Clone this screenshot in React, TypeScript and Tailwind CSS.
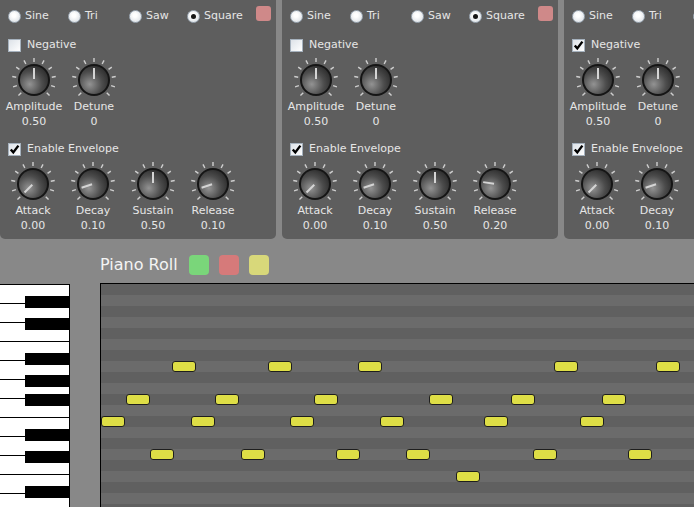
import React from 'react';

type Wave = 'Sine' | 'Tri' | 'Saw' | 'Square';

const WAVES: { name: Wave; w: string }[] = [
  { name: 'Sine', w: 'w-[60px]' },
  { name: 'Tri', w: 'w-[61px]' },
  { name: 'Saw', w: 'w-[58px]' },
  { name: 'Square', w: 'w-[69px]' },
];

const Radio: React.FC<{ checked: boolean; label: string; className: string }> = ({ checked, label, className }) => (
  <div className={`flex items-center ${className}`}>
    <span className="w-[13px] h-[13px] shrink-0 rounded-full border border-[#9eaab6] bg-[radial-gradient(circle_at_45%_40%,#ffffff_20%,#d3d9df)] flex items-center justify-center">
      {checked && <span className="w-[5px] h-[5px] rounded-full bg-[#161616]" />}
    </span>
    <span className="ml-[4px]">{label}</span>
  </div>
);

const Checkbox: React.FC<{ checked: boolean; label: string }> = ({ checked, label }) => (
  <div className="flex items-center h-[14px] pl-[8px]">
    <span className="w-[13px] h-[13px] shrink-0 border border-[#a6b2be] bg-[linear-gradient(135deg,#dde2e8,#ffffff)] flex items-center justify-center">
      {checked && (
        <svg width="11" height="11" viewBox="0 0 11 11">
          <path d="M1.8 5.4 L4.3 8.4 L9.4 1.6" fill="none" stroke="#000" strokeWidth="2.4" />
        </svg>
      )}
    </span>
    <span className="ml-[6px]">{label}</span>
  </div>
);

// angle in degrees measured from straight up
const Knob: React.FC<{ angle: number; label: string; value: string }> = ({ angle, label, value }) => {
  const id = React.useId().replace(/:/g, '');
  const rad = (a: number) => (a * Math.PI) / 180;
  const ticks = Array.from({ length: 11 }, (_, i) => -135 + i * 27);
  return (
    <div className="w-[60px] flex flex-col items-center shrink-0">
      <svg width="60" height="40" viewBox="-30 -20 60 40" className="overflow-visible">
        <defs>
          <radialGradient id={`k${id}`} cx="0.35" cy="0.65" r="0.8">
            <stop offset="0" stopColor="#939393" />
            <stop offset="0.55" stopColor="#4c4c4c" />
            <stop offset="1" stopColor="#262626" />
          </radialGradient>
        </defs>
        {ticks.map((t) => (
          <line
            key={t}
            x1={Math.sin(rad(t)) * 18}
            y1={-Math.cos(rad(t)) * 18}
            x2={Math.sin(rad(t)) * 22}
            y2={-Math.cos(rad(t)) * 22}
            stroke="#cfcfcf"
            strokeWidth="1.4"
          />
        ))}
        <circle r="16" fill="#151515" />
        <circle r="14" fill={`url(#k${id})`} />
        <line
          x1={Math.sin(rad(angle)) * 1}
          y1={-Math.cos(rad(angle)) * 1}
          x2={Math.sin(rad(angle)) * 12}
          y2={-Math.cos(rad(angle)) * 12}
          stroke="#d4d4d4"
          strokeWidth="2"
        />
      </svg>
      <div className="h-[13px] leading-[13px]">{label}</div>
      <div className="h-[17px] leading-[17px]">{value}</div>
    </div>
  );
};

const level = (v: number) => -135 + v * 270;

const Panel: React.FC<{ negative: boolean; release: number }> = ({ negative, release }) => (
  <div className="w-[276px] h-[239px] shrink-0 bg-[#5e5e5e] rounded-b-[5px] text-[#e6e6e6] text-[11px] flex flex-col">
    <div className="h-[31px] flex items-center pl-[8px] pt-[1px]">
      {WAVES.map((w) => (
        <Radio key={w.name} checked={w.name === 'Square'} label={w.name} className={w.w} />
      ))}
      <span className="w-[15px] h-[15px] mb-[5px] rounded-[3px] bg-[#cf8989]" />
    </div>
    <div className="mt-[7px]">
      <Checkbox checked={negative} label="Negative" />
    </div>
    <div className="mt-[8px] flex pl-[4px]">
      <Knob angle={level(0.5)} label="Amplitude" value="0.50" />
      <Knob angle={0} label="Detune" value="0" />
    </div>
    <div className="mt-[12px]">
      <Checkbox checked label="Enable Envelope" />
    </div>
    <div className="mt-[8px] flex pl-[3px]">
      <Knob angle={level(0)} label="Attack" value="0.00" />
      <Knob angle={level(0.1)} label="Decay" value="0.10" />
      <Knob angle={level(0.5)} label="Sustain" value="0.50" />
      <Knob angle={level(release)} label="Release" value={release.toFixed(2)} />
    </div>
  </div>
);

const BLACK_KEYS = [11, 33, 68, 90, 109, 144, 166, 201];

const NOTES: { row: number; xs: number[] }[] = [
  { row: 7, xs: [172, 268, 358, 554, 656] },
  { row: 10, xs: [126, 215, 314, 429, 511, 602] },
  { row: 12, xs: [101, 191, 290, 380, 484, 580] },
  { row: 15, xs: [150, 241, 336, 406, 533, 628] },
  { row: 17, xs: [456] },
];

const App: React.FC = () => {
  return (
    <div className="w-[694px] h-[507px] overflow-hidden bg-[#888888] font-['DejaVu_Sans',sans-serif]">
      <div className="flex gap-[6px]">
        <Panel negative={false} release={0.1} />
        <Panel negative={false} release={0.2} />
        <Panel negative release={0.1} />
      </div>

      <div className="mt-[16px] ml-[100px] h-[20px] flex items-center">
        <span className="text-[16px] text-[#f4f4f4]">Piano Roll</span>
        <div className="flex gap-[10px] ml-[11px]">
          <span className="w-[20px] h-[20px] rounded-[4px] bg-[#7ad67a]" />
          <span className="w-[20px] h-[20px] rounded-[4px] bg-[#d67a7a]" />
          <span className="w-[20px] h-[20px] rounded-[4px] bg-[#d8d87a]" />
        </div>
      </div>

      <div className="mt-[8px] flex items-start">
        <div className="relative w-[70px] shrink-0 mt-[1px] border-t border-r border-black bg-white">
          {Array.from({ length: 12 }, (_, i) => (
            <div key={i} className="h-[19px] border-b border-black" />
          ))}
          {BLACK_KEYS.map((t) => (
            <div key={t} className="absolute left-[25px] right-0 h-[12px] bg-black" style={{ top: t }} />
          ))}
        </div>

        <div className="relative ml-[30px] flex-1 border-l border-t border-black">
          {Array.from({ length: 21 }, (_, i) => (
            <div key={i} className={`h-[11px] ${i % 2 === 0 ? 'bg-[#606060]' : 'bg-[#6b6b6b]'}`} />
          ))}
          {NOTES.flatMap((n) =>
            n.xs.map((x) => (
              <div
                key={`${n.row}-${x}`}
                className="absolute w-[24px] h-[11px] rounded-[3px] border border-[#1e1e1e] bg-[#dede46]"
                style={{ top: n.row * 11, left: x - 101 }}
              />
            ))
          )}
        </div>
      </div>
    </div>
  );
};

export default App;
